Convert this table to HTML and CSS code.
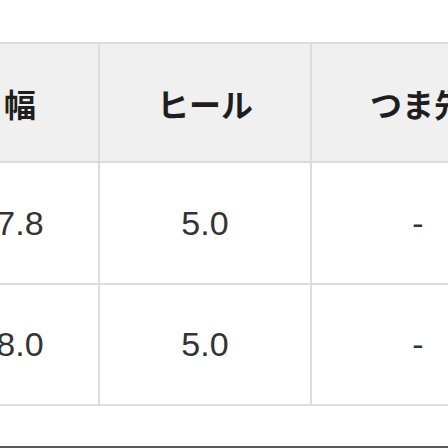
FILE: index.html
```html
<!DOCTYPE html>
<html lang="ja">
<head>
<meta charset="utf-8">
<link rel="stylesheet" href="styles.css">
</head>
<body>
<div class="page">
  <div class="size-table">
    <div class="cell head">幅</div>
    <div class="cell head">ヒール</div>
    <div class="cell head">つま先</div>
    <div class="cell">7.8</div>
    <div class="cell">5.0</div>
    <div class="cell">-</div>
    <div class="cell">8.0</div>
    <div class="cell">5.0</div>
    <div class="cell">-</div>
  </div>
  <div class="footer-rule"></div>
</div>
</body>
</html>
```
FILE: styles.css
```css
html, body {
  margin: 0;
  padding: 0;
  overflow: hidden;
  background: #ffffff;
}
.page {
  width: 448px;
  height: 448px;
  overflow: hidden;
  padding-top: 42px;
  box-sizing: border-box;
}
.size-table {
  display: grid;
  grid-template-columns: 156px 210px 212px;
  grid-template-rows: 117px 120px 119px;
  gap: 2px;
  width: max-content;
  margin-left: -58px;
  background: #dcdcdc;
  border-top: 2px solid #dcdcdc;
  border-bottom: 2px solid #dcdcdc;
}
.cell {
  background: #ffffff;
  display: flex;
  align-items: center;
  justify-content: center;
  font-family: "Liberation Sans", Arial, sans-serif;
  font-size: 34px;
  color: #333333;
}
.cell.head {
  background: #f0f0f0;
  font-family: "Noto Sans CJK JP", "Noto Sans", sans-serif;
  font-weight: 700;
  font-size: 32px;
  color: #1e1e1e;
}
.footer-rule {
  margin-top: 40px;
  border-top: 2px solid #5a5a5a;
}
```
